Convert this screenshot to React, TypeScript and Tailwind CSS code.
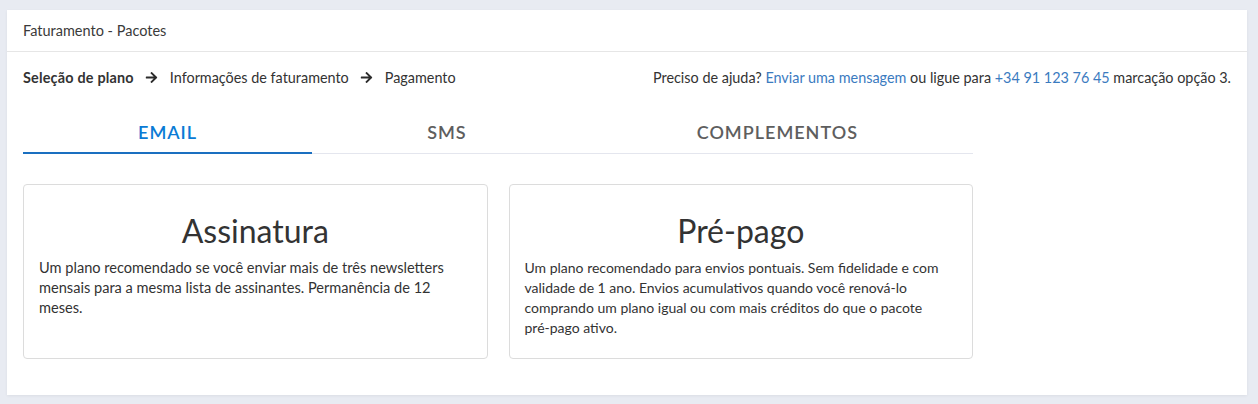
import React from "react";

const Arrow = () => (
  <svg width="13" height="13" viewBox="0 0 448 512" className="ml-[11px] mr-[12px] shrink-0" fill="#2b2b2b">
    <path d="M190.5 66.9l22.2-22.2c9.4-9.4 24.6-9.4 33.9 0L441 239c9.4 9.4 9.4 24.6 0 33.9L246.6 467.3c-9.4 9.4-24.6 9.4-33.9 0l-22.2-22.2c-9.5-9.5-9.3-25 .4-34.3L311.4 296H24c-13.3 0-24-10.7-24-24v-32c0-13.3 10.7-24 24-24h287.4L190.9 101.2c-9.8-9.3-10-24.8-.4-34.3z" />
  </svg>
);

export default function App() {
  const font = { fontFamily: "Lato, 'Noto Sans', sans-serif" };
  return (
    <div className="min-h-[404px] bg-[#e8ebf2] pt-[10px] pl-[7px] pr-[11px] pb-[10px]" style={font}>
      <div className="bg-white shadow-[0_1px_3px_rgba(0,0,0,0.06)]">
        <div className="h-[42px] flex items-center px-[16px] border-b border-[#e6e6e6] text-[14.5px] text-[#3a3a3a]">
          Faturamento - Pacotes
        </div>
        <div className="px-[16px] pt-[15px] pb-[36px]">
          <div className="flex items-center justify-between h-[22px] text-[14.4px] text-[#333]">
            <div className="flex items-center">
              <span className="font-bold tracking-[0.2px]">Seleção de plano</span>
              <Arrow />
              <span>Informações de faturamento</span>
              <Arrow />
              <span>Pagamento</span>
            </div>
            <div>
              Preciso de ajuda? <span className="text-[#3b7bbf]">Enviar uma mensagem</span> ou ligue para{" "}
              <span className="text-[#3b7bbf]">+34 91 123 76 45</span> marcação opção 3.
            </div>
          </div>
          <div className="w-[950px]">
            <div className="flex mt-[30px] border-b border-[#e4e6ee]">
              <div className="flex-auto text-center pb-[6px] border-b-2 border-[#1a6fc0] -mb-px text-[18px] font-semibold tracking-[1px] text-[#0a7bd5]">
                EMAIL
              </div>
              <div className="flex-auto text-center pb-[6px] text-[18px] font-semibold tracking-[1px] text-[#5e5e5e]">
                SMS
              </div>
              <div className="flex-auto text-center pb-[6px] text-[18px] font-semibold tracking-[1px] text-[#5e5e5e]">
                COMPLEMENTOS
              </div>
            </div>
            <div className="grid grid-cols-2 gap-[21px] mt-[30px]">
              <div className="border border-[#dcdcdc] rounded-[4px] px-[15px] pt-[27px] pb-[20px] text-[#333]">
                <div className="text-center text-[32px] leading-[38px] mb-[8px]">Assinatura</div>
                <p className="text-[14.6px] leading-[20px]">
                  Um plano recomendado se você enviar mais de três newsletters mensais para a mesma lista de assinantes. Permanência de 12 meses.
                </p>
              </div>
              <div className="border border-[#dcdcdc] rounded-[4px] px-[15px] pt-[27px] pb-[20px] text-[#333]">
                <div className="text-center text-[32px] leading-[38px] mb-[8px]">Pré-pago</div>
                <p className="text-[14px] leading-[20px]">
                  Um plano recomendado para envios pontuais. Sem fidelidade e com validade de 1 ano. Envios acumulativos quando você renová-lo comprando um plano igual ou com mais créditos do que o pacote{" "}
                  <span className="whitespace-nowrap">pré-pago</span> ativo.
                </p>
              </div>
            </div>
          </div>
        </div>
      </div>
    </div>
  );
}
